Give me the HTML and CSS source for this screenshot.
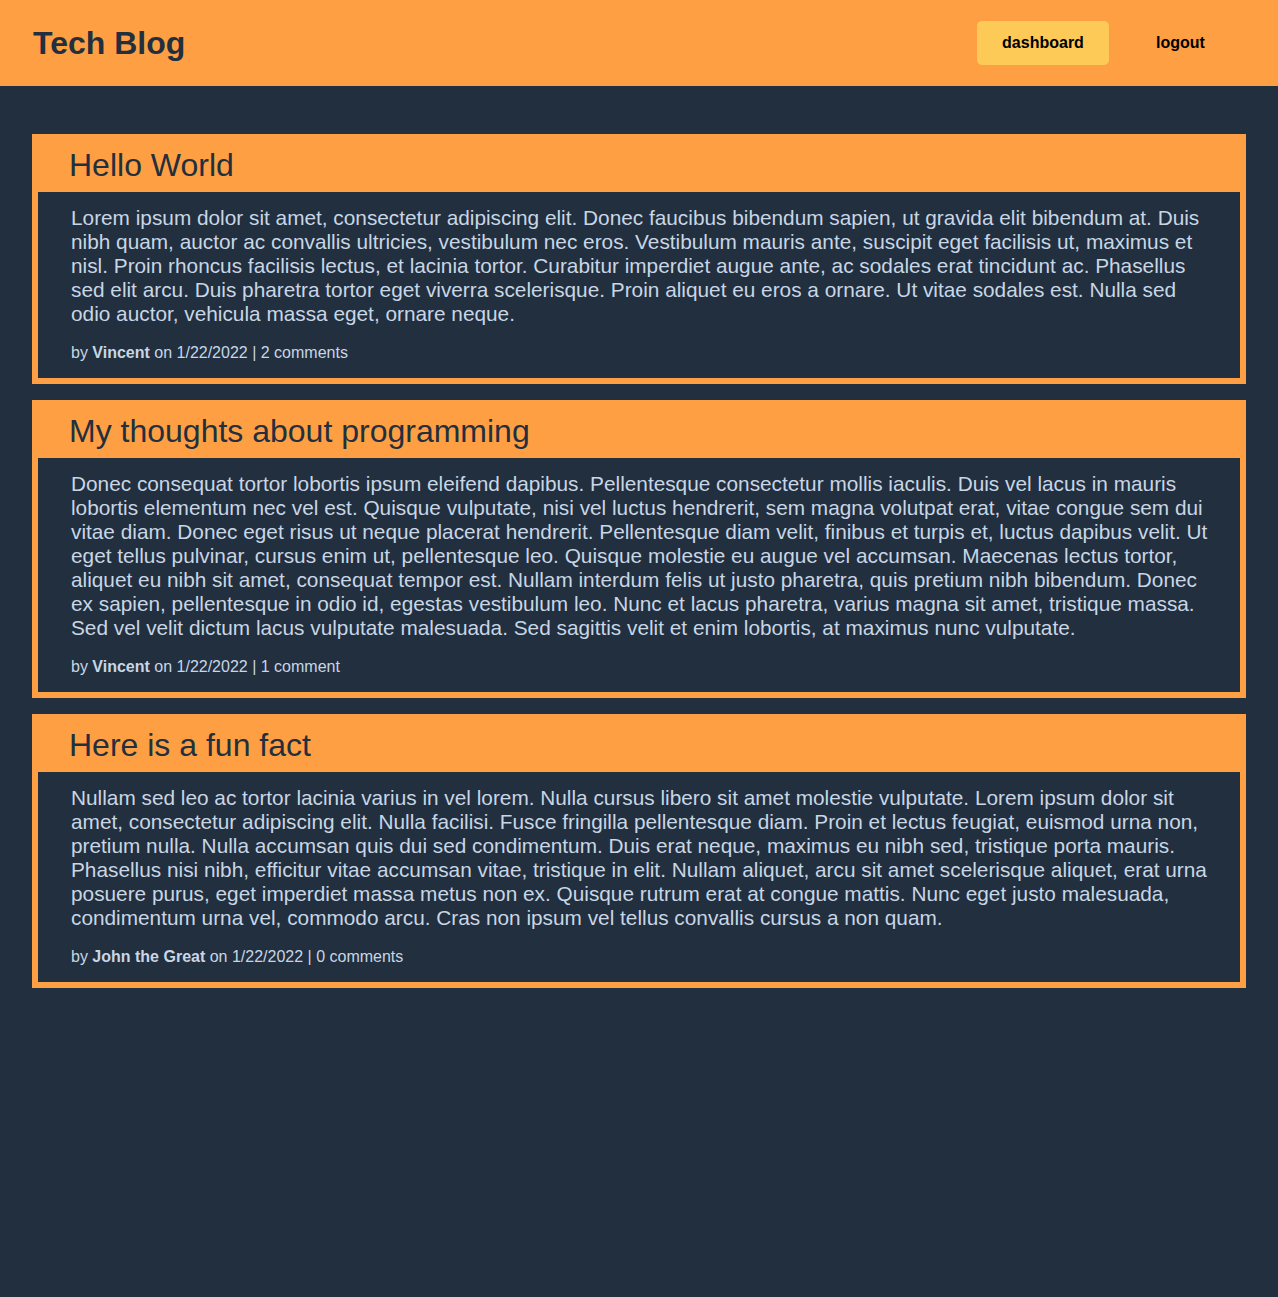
FILE: index.html
```html
<!DOCTYPE html>
<html lang="en">
<head>
<meta charset="utf-8">
<title>Tech Blog</title>
<link rel="stylesheet" href="styles.css">
</head>
<body>
<header class="site-header">
  <h1 class="brand">Tech Blog</h1>
  <nav class="nav">
    <a class="nav-btn nav-btn-active" href="#">dashboard</a>
    <a class="nav-btn" href="#">logout</a>
  </nav>
</header>
<main class="posts">
  <article class="post">
    <h2 class="post-title">Hello World</h2>
    <div class="post-body">
      <p class="post-text">Lorem ipsum dolor sit amet, consectetur adipiscing elit. Donec faucibus bibendum sapien, ut gravida elit bibendum at. Duis nibh quam, auctor ac convallis ultricies, vestibulum nec eros. Vestibulum mauris ante, suscipit eget facilisis ut, maximus et nisl. Proin rhoncus facilisis lectus, et lacinia tortor. Curabitur imperdiet augue ante, ac sodales erat tincidunt ac. Phasellus sed elit arcu. Duis pharetra tortor eget viverra scelerisque. Proin aliquet eu eros a ornare. Ut vitae sodales est. Nulla sed odio auctor, vehicula massa eget, ornare neque.</p>
      <p class="post-meta">by <strong>Vincent</strong> on 1/22/2022 | 2 comments</p>
    </div>
  </article>
  <article class="post">
    <h2 class="post-title">My thoughts about programming</h2>
    <div class="post-body">
      <p class="post-text">Donec consequat tortor lobortis ipsum eleifend dapibus. Pellentesque consectetur mollis iaculis. Duis vel lacus in mauris lobortis elementum nec vel est. Quisque vulputate, nisi vel luctus hendrerit, sem magna volutpat erat, vitae congue sem dui vitae diam. Donec eget risus ut neque placerat hendrerit. Pellentesque diam velit, finibus et turpis et, luctus dapibus velit. Ut eget tellus pulvinar, cursus enim ut, pellentesque leo. Quisque molestie eu augue vel accumsan. Maecenas lectus tortor, aliquet eu nibh sit amet, consequat tempor est. Nullam interdum felis ut justo pharetra, quis pretium nibh bibendum. Donec ex sapien, pellentesque in odio id, egestas vestibulum leo. Nunc et lacus pharetra, varius magna sit amet, tristique massa. Sed vel velit dictum lacus vulputate malesuada. Sed sagittis velit et enim lobortis, at maximus nunc vulputate.</p>
      <p class="post-meta">by <strong>Vincent</strong> on 1/22/2022 | 1 comment</p>
    </div>
  </article>
  <article class="post">
    <h2 class="post-title">Here is a fun fact</h2>
    <div class="post-body">
      <p class="post-text">Nullam sed leo ac tortor lacinia varius in vel lorem. Nulla cursus libero sit amet molestie vulputate. Lorem ipsum dolor sit amet, consectetur adipiscing elit. Nulla facilisi. Fusce fringilla pellentesque diam. Proin et lectus feugiat, euismod urna non, pretium nulla. Nulla accumsan quis dui sed condimentum. Duis erat neque, maximus eu nibh sed, tristique porta mauris. Phasellus nisi nibh, efficitur vitae accumsan vitae, tristique in elit. Nullam aliquet, arcu sit amet scelerisque aliquet, erat urna posuere purus, eget imperdiet massa metus non ex. Quisque rutrum erat at congue mattis. Nunc eget justo malesuada, condimentum urna vel, commodo arcu. Cras non ipsum vel tellus convallis cursus a non quam.</p>
      <p class="post-meta">by <strong>John the Great</strong> on 1/22/2022 | 0 comments</p>
    </div>
  </article>
</main>
</body>
</html>
```
FILE: styles.css
```css
* { box-sizing: border-box; }
html, body {
  margin: 0;
  padding: 0;
  background: #222f3e;
  font-family: "Liberation Sans", Arial, sans-serif;
}
body { min-height: 1297px; }
.site-header {
  background: #ff9f43;
  height: 86px;
  display: flex;
  align-items: center;
  justify-content: space-between;
  padding: 0 47px 0 33px;
}
.brand {
  margin: 0;
  font-size: 32px;
  font-weight: bold;
  color: #222f3e;
}
.nav {
  display: flex;
  gap: 21px;
}
.nav-btn {
  display: block;
  width: 132px;
  height: 44px;
  line-height: 44px;
  text-align: center;
  border-radius: 5px;
  color: #000;
  font-weight: bold;
  font-size: 16px;
  text-decoration: none;
}
.nav-btn-active { background: #feca57; }
.nav-btn:last-child { width: 101px; }
.posts {
  padding: 48px 32px;
  display: flex;
  flex-direction: column;
  gap: 16px;
}
.post {
  background: #ff9f43;
  border: 6px solid #ff9f43;
}
.post-title {
  margin: 0;
  height: 52px;
  padding-left: 31px;
  font-size: 32px;
  font-weight: normal;
  color: #222f3e;
  line-height: 50px;
}
.post-body {
  background: #222f3e;
  padding: 14px 30px 16px 33px;
  color: #c8d6e5;
}
.post-text {
  margin: 0;
  font-size: 20.8px;
  line-height: 24px;
}
.post-meta {
  margin: 18px 0 0;
  font-size: 16px;
  line-height: 18px;
}
```
